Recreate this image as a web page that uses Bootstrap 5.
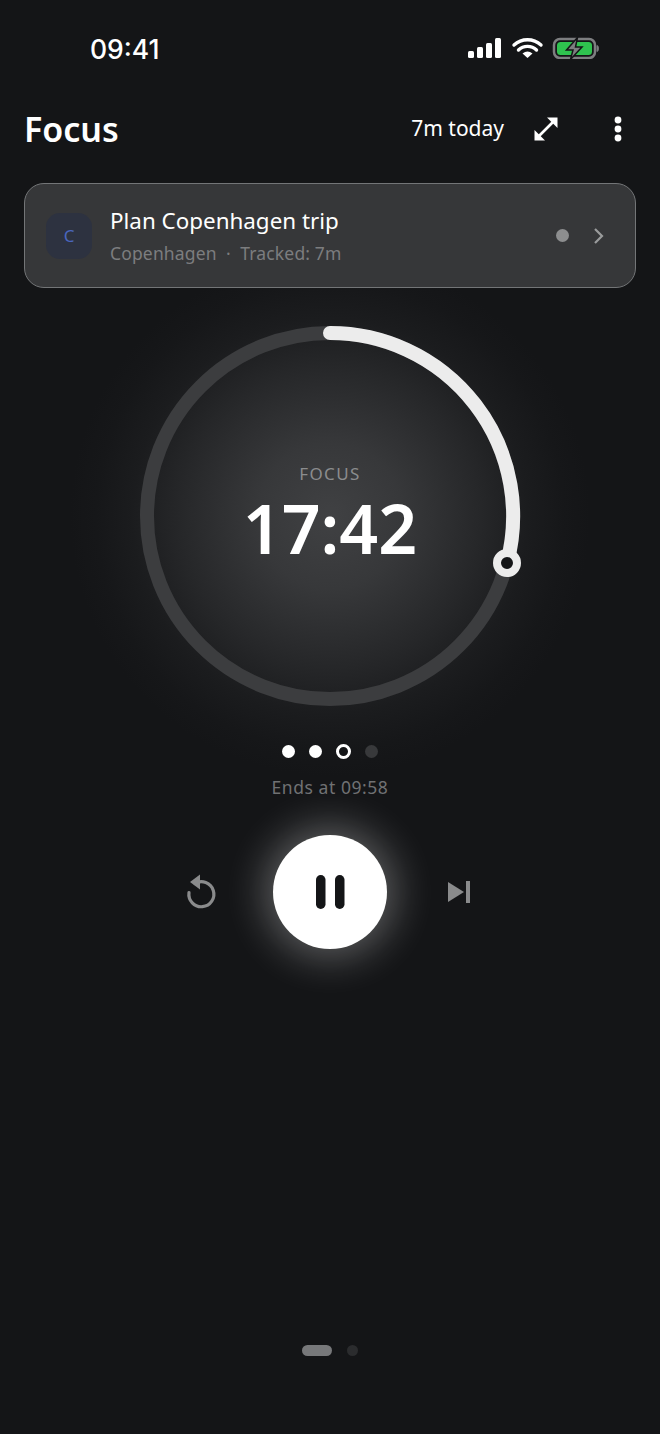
<!DOCTYPE html>
<html lang="en">
<head>
  <meta charset="UTF-8" />
  <title>Focus</title>
  <link href="https://cdn.jsdelivr.net/npm/bootstrap@5.3.3/dist/css/bootstrap.min.css" rel="stylesheet">
  <style>
    body { background: #141517; color: #fff; font-family: "Noto Sans", "Open Sans", sans-serif; width: 660px; height: 1434px; overflow: hidden; }
    .status-row { height: 97px; padding: 32px 61px 0 90px; }
    .status-time { font-family: Inter, sans-serif; font-size: 26.5px; font-weight: 500; line-height: 34px; }
    .status-icons { margin-top: 5px; }
    .head-row { height: 64px; padding: 0 24px; }
    .head-title { font-size: 34px; font-weight: 600; line-height: 64px; margin: 0; }
    .head-today { font-size: 21px; margin-right: 28px; }
    .head-more { margin: 0 14px 0 54px; }
    .task-box { margin: 22px 24px 0; height: 105px; background: #363739; border: 1.5px solid #737577; border-radius: 20px; padding: 0 21px; }
    .task-tile { width: 46px; height: 46px; background: #2d3240; border-radius: 14px; color: #4a66bd; font-size: 17px; }
    .task-text { margin-left: 18px; }
    .task-name { font-size: 22.4px; line-height: 28px; margin-top: 1px; }
    .task-sub { font-size: 17.5px; line-height: 24px; color: #7c7d7f; margin-top: 6px; letter-spacing: .15px; }
    .task-dot { width: 13px; height: 13px; border-radius: 50%; background: #8d8e8f; }
    .task-chev { margin: 0 9px 0 24px; }
    .ring-wrap { width: 400px; height: 400px; margin: 28px auto 0; position: relative; }
    .ring-wrap::before { content: ""; position: absolute; inset: -60px; z-index: -1; border-radius: 50%; background: radial-gradient(circle closest-side, #404143 0%, #37383a 28%, #262729 58%, #1b1c1e 76%, #161719 90%, #141517 100%); }
    .ring-wrap svg { position: absolute; inset: 0; }
    .ring-center { position: absolute; left: 0; right: 0; top: 150px; text-align: center; }
    .ring-label { font-size: 17px; line-height: 16px; letter-spacing: 1.400px; color: #8b8c8e; }
    .ring-time { font-size: 68px; font-weight: 600; line-height: 60px; margin-top: 16px; }
    .round-row { margin-top: 28px; height: 14px; gap: 14px; }
    .round-dot { width: 13px; height: 13px; border-radius: 50%; background: #fff; }
    .round-now { width: 15px; height: 15px; background: #141517; border: 3px solid #fff; }
    .round-next { background: #38393b; }
    .ends-text { font-size: 17.5px; line-height: 24px; color: #707173; letter-spacing: .55px; margin-top: 17px; }
    .ctrl-row { margin-top: 36px; height: 114px; }
    .pause-btn { width: 114px; height: 114px; padding: 0; border: 0; border-radius: 50%; background: #fff; box-shadow: 0 0 40px 8px rgba(255,255,255,.32); margin: 0 55px 0 55px; }
    .pause-btn:hover, .pause-btn:active { background: #fff !important; }
    .side-btn { width: 34px; height: 40px; padding: 0; border: 0; background: none; }
    .pager-row { position: absolute; top: 1345px; left: 0; right: 0; gap: 15px; }
    .pager-pill { width: 30px; height: 11px; border-radius: 6px; background: #77787a; }
    .pager-dot { width: 11px; height: 11px; border-radius: 50%; background: #2b2c2e; }
  </style>
</head>
<body>
  <!-- Status bar -->
  <div class="status-row d-flex justify-content-between align-items-start">
    <div class="status-time">09:41</div>
    <svg width="131" height="22" viewBox="0 0 131 22" class="status-icons" fill="#fff">
      <rect x="0" y="14" width="6" height="7" rx="1.500"/>
      <rect x="9" y="10" width="6" height="11" rx="1.500"/>
      <rect x="18" y="6" width="6" height="15" rx="1.500"/>
      <rect x="27" y="1" width="6" height="20" rx="1.500"/>
      <path d="M46 8a20 20 0 0 1 27 0M50.500 13a13 13 0 0 1 18 0" fill="none" stroke="#fff" stroke-width="3.400" stroke-linecap="round"/>
      <path d="M54.500 16.500a8 8 0 0 1 10 0L59.500 21z"/>
      <rect x="86" y="2" width="41" height="19" rx="6" fill="none" stroke="#7d7e80" stroke-width="2.500"/>
      <rect x="89" y="5" width="35" height="13" rx="3.500" fill="#2fc24f"/>
      <path d="M129 8.500c2 .5 2 5.500 0 6z" fill="#7d7e80" stroke="#7d7e80"/>
      <path d="M109.500 .5L98.500 13h6.500l-2.500 9.500L114 10h-6.500z" fill="#7d7e80" stroke="#141517" stroke-width="1.500"/>
    </svg>
  </div>

  <!-- Header -->
  <div class="head-row d-flex align-items-center">
    <h1 class="head-title flex-grow-1">Focus</h1>
    <span class="head-today">7m today</span>
    <svg width="28" height="28" viewBox="0 0 28 28" fill="none" stroke="#fff" stroke-width="2.600">
      <path d="M6 22L22 6"/>
      <path d="M15 2.500h10.500V13z" fill="#fff" stroke="none"/>
      <path d="M13 25.500H2.500V15z" fill="#fff" stroke="none"/>
    </svg>
    <svg width="8" height="28" viewBox="0 0 8 28" fill="#fff" class="head-more">
      <circle cx="4" cy="5" r="3.400"/><circle cx="4" cy="14" r="3.400"/><circle cx="4" cy="23" r="3.400"/>
    </svg>
  </div>

  <!-- Task card -->
  <div class="task-box d-flex align-items-center">
    <div class="task-tile d-flex align-items-center justify-content-center flex-shrink-0">C</div>
    <div class="task-text flex-grow-1">
      <div class="task-name">Plan Copenhagen trip</div>
      <div class="task-sub">Copenhagen &nbsp;·&nbsp; Tracked: 7m</div>
    </div>
    <div class="task-dot"></div>
    <svg width="12" height="18" viewBox="0 0 12 18" fill="none" stroke="#9a9b9c" stroke-width="2.200" class="task-chev">
      <path d="M2 2l7 7-7 7"/>
    </svg>
  </div>

  <!-- Timer ring -->
  <div class="ring-wrap">
    <svg width="400" height="400" viewBox="0 0 400 400" fill="none">
      <circle cx="200" cy="200" r="183" stroke="#3c3d3f" stroke-width="14"/>
      <path d="M200 17A183 183 0 0 1 377 247" stroke="#ececec" stroke-width="14" stroke-linecap="round"/>
      <circle cx="377" cy="247" r="10" fill="#141517" stroke="#ececec" stroke-width="8"/>
    </svg>
    <div class="ring-center">
      <div class="ring-label">FOCUS</div>
      <div class="ring-time">17:42</div>
    </div>
  </div>

  <div class="round-row d-flex justify-content-center align-items-center">
    <div class="round-dot"></div>
    <div class="round-dot"></div>
    <div class="round-dot round-now"></div>
    <div class="round-dot round-next"></div>
  </div>
  <div class="ends-text text-center">Ends at 09:58</div>

  <!-- Controls -->
  <div class="ctrl-row d-flex justify-content-center align-items-center">
    <button class="side-btn d-flex align-items-center justify-content-center">
      <svg width="32" height="36" viewBox="1 1 32 36" fill="none">
        <path d="M11 10.500a12.500 12.500 0 1 1-6 9" stroke="#8a8b8c" stroke-width="3.200" stroke-linecap="round"/>
        <path d="M16 1.500v15L6 9z" fill="#8a8b8c"/>
      </svg>
    </button>
    <button class="btn pause-btn d-flex align-items-center justify-content-center">
      <svg width="30" height="34" viewBox="0 0 30 34" fill="#141517">
        <rect x="1" y="0" width="9.500" height="34" rx="4.700"/><rect x="20" y="0" width="9.500" height="34" rx="4.700"/>
      </svg>
    </button>
    <button class="side-btn d-flex align-items-center justify-content-center">
      <svg width="24" height="24" viewBox="0 0 24 24" fill="#8a8b8c">
        <path d="M1 2l16 10L1 22z"/><rect x="19" y="1" width="4" height="22"/>
      </svg>
    </button>
  </div>

  <!-- Pager -->
  <div class="pager-row d-flex justify-content-center align-items-center">
    <div class="pager-pill"></div>
    <div class="pager-dot"></div>
  </div>
  <script src="https://cdn.jsdelivr.net/npm/bootstrap@5.3.3/dist/js/bootstrap.bundle.min.js"></script>
</body>
</html>
